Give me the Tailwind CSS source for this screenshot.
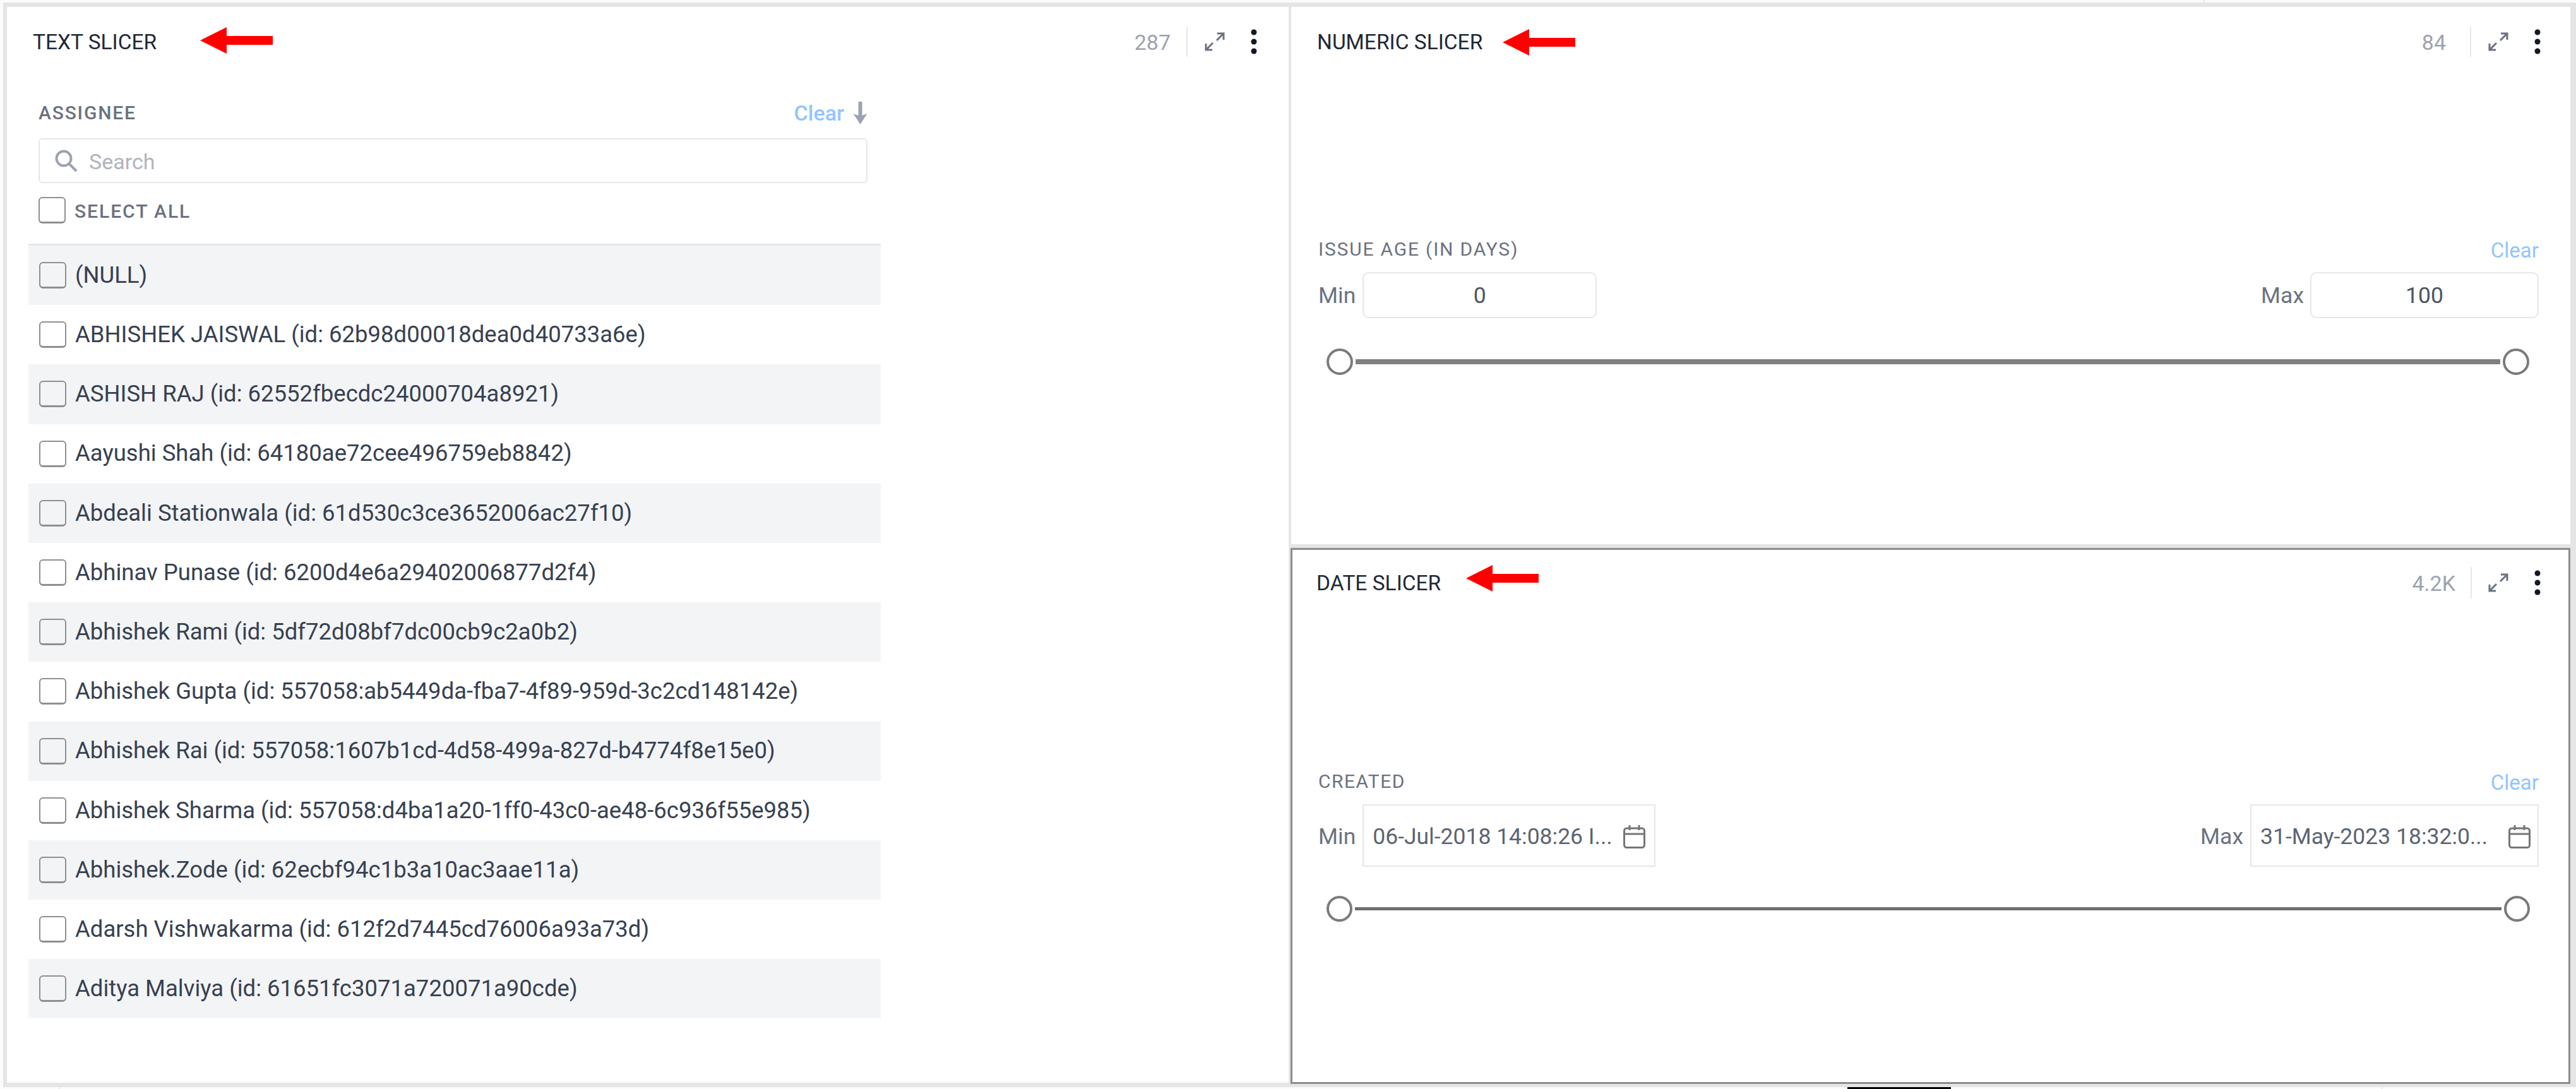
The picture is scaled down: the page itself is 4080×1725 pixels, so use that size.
<!DOCTYPE html>
<html lang="en">
<head>
    <meta charset="UTF-8">
    <title>Slicers</title>
    <script src="https://cdn.jsdelivr.net/npm/@tailwindcss/browser@4"></script>
</head>
<body class="m-0 bg-white">
<div class="relative w-[4080px] h-[1725px] overflow-hidden bg-[#fbfbfb] font-['Roboto',sans-serif]">

    <!-- top strip -->
    <div class="flex h-[4px]">
        <div class="w-[3490px]"></div>
        <div class="w-[2px] h-full bg-[#e5e5e5]"></div>
    </div>

    <div class="flex items-start gap-[3px] ml-[5px] h-[1718px] pl-[6px] pt-[7px] bg-[#e5e5e5]">

        <!-- Text slicer -->
        <section class="w-[2030px] h-[1704px] bg-white">
            <div class="flex items-center justify-between h-[110px] pl-[41px] pr-[50px]">
                <h2 class="pt-[2px] text-[33.500px] leading-none text-[#1f2937]">TEXT SLICER</h2>
                <div class="flex items-center">
                    <span class="pt-[2px] text-[34px] leading-none text-[#9ca3af]">287</span>
                    <div class="w-[2px] h-[47px] ml-[25px] mr-[27px] bg-[#e5e7eb]"></div>
                    <svg class="w-[32px] h-[30px]" viewBox="0 0 32 30" fill="none" stroke="#6b7280" stroke-width="3"><path d="M2 18v10h10M2 28l11-11M20 2h10v10M30 2L19 13"/></svg>
                    <svg class="w-[10px] h-[40px] ml-[41px]" viewBox="0 0 10 40" fill="#111827"><circle cx="5" cy="5" r="4.5"/><circle cx="5" cy="20" r="4.5"/><circle cx="5" cy="35" r="4.5"/></svg>
                </div>
            </div>

            <div class="w-[1313px] ml-[50px]">
                <div class="flex items-center justify-between h-[36px] mt-[40px]">
                    <span class="text-[30px] leading-none font-medium tracking-[0.06em] text-[#6b7280]">ASSIGNEE</span>
                    <div class="flex items-center gap-[14px]">
                        <span class="text-[34px] leading-none font-medium text-[#93c5fd]">Clear</span>
                        <svg class="w-[23px] h-[36px]" viewBox="0 0 23 36" fill="#9ca3af"><path d="M8.500 0h6v22l8-3-11 17L0.500 19l8 3z"/></svg>
                    </div>
                </div>
                <div class="flex items-center h-[71px] mt-[22px] pl-[24px] border-2 border-[#e5e7eb] rounded-[6px]">
                    <svg class="w-[36px] h-[36px]" viewBox="0 0 36 36" fill="none" stroke="#9ca3af" stroke-width="4"><circle cx="14" cy="14" r="11.500"/><path d="M22.500 22.500L34 34"/></svg>
                    <span class="ml-[18px] pt-[2px] text-[34px] leading-none text-[#b0b5bd]">Search</span>
                </div>
                <div class="flex items-center h-[42px] mt-[22px] mb-[32px]">
                    <div class="w-[43px] h-[42px] rounded-[6px] border-2 border-b-[3px] border-[#8f8f8f] bg-white"></div>
                    <span class="ml-[14px] pt-[3px] text-[30px] leading-none font-medium tracking-[0.065em] text-[#6b7280]">SELECT ALL</span>
                </div>
            </div>

            <div class="w-[1350px] ml-[34px] border-t-[3px] border-[#e5e7eb] text-[36.500px] leading-none text-[#374151]">
                <div class="flex items-center h-[94.200px] pl-[17px] bg-[#f3f4f6]"><div class="w-[43px] h-[42px] mr-[14px] rounded-[6px] border-2 border-b-[3px] border-[#8f8f8f]"></div>(NULL)</div>
                <div class="flex items-center h-[94.200px] pl-[17px]"><div class="w-[43px] h-[42px] mr-[14px] rounded-[6px] border-2 border-b-[3px] border-[#8f8f8f]"></div>ABHISHEK JAISWAL (id: 62b98d00018dea0d40733a6e)</div>
                <div class="flex items-center h-[94.200px] pl-[17px] bg-[#f3f4f6]"><div class="w-[43px] h-[42px] mr-[14px] rounded-[6px] border-2 border-b-[3px] border-[#8f8f8f]"></div>ASHISH RAJ (id: 62552fbecdc24000704a8921)</div>
                <div class="flex items-center h-[94.200px] pl-[17px]"><div class="w-[43px] h-[42px] mr-[14px] rounded-[6px] border-2 border-b-[3px] border-[#8f8f8f]"></div>Aayushi Shah (id: 64180ae72cee496759eb8842)</div>
                <div class="flex items-center h-[94.200px] pl-[17px] bg-[#f3f4f6]"><div class="w-[43px] h-[42px] mr-[14px] rounded-[6px] border-2 border-b-[3px] border-[#8f8f8f]"></div>Abdeali Stationwala (id: 61d530c3ce3652006ac27f10)</div>
                <div class="flex items-center h-[94.200px] pl-[17px]"><div class="w-[43px] h-[42px] mr-[14px] rounded-[6px] border-2 border-b-[3px] border-[#8f8f8f]"></div>Abhinav Punase (id: 6200d4e6a29402006877d2f4)</div>
                <div class="flex items-center h-[94.200px] pl-[17px] bg-[#f3f4f6]"><div class="w-[43px] h-[42px] mr-[14px] rounded-[6px] border-2 border-b-[3px] border-[#8f8f8f]"></div>Abhishek Rami (id: 5df72d08bf7dc00cb9c2a0b2)</div>
                <div class="flex items-center h-[94.200px] pl-[17px]"><div class="w-[43px] h-[42px] mr-[14px] rounded-[6px] border-2 border-b-[3px] border-[#8f8f8f]"></div>Abhishek Gupta (id: 557058:ab5449da-fba7-4f89-959d-3c2cd148142e)</div>
                <div class="flex items-center h-[94.200px] pl-[17px] bg-[#f3f4f6]"><div class="w-[43px] h-[42px] mr-[14px] rounded-[6px] border-2 border-b-[3px] border-[#8f8f8f]"></div>Abhishek Rai (id: 557058:1607b1cd-4d58-499a-827d-b4774f8e15e0)</div>
                <div class="flex items-center h-[94.200px] pl-[17px]"><div class="w-[43px] h-[42px] mr-[14px] rounded-[6px] border-2 border-b-[3px] border-[#8f8f8f]"></div>Abhishek Sharma (id: 557058:d4ba1a20-1ff0-43c0-ae48-6c936f55e985)</div>
                <div class="flex items-center h-[94.200px] pl-[17px] bg-[#f3f4f6]"><div class="w-[43px] h-[42px] mr-[14px] rounded-[6px] border-2 border-b-[3px] border-[#8f8f8f]"></div>Abhishek.Zode (id: 62ecbf94c1b3a10ac3aae11a)</div>
                <div class="flex items-center h-[94.200px] pl-[17px]"><div class="w-[43px] h-[42px] mr-[14px] rounded-[6px] border-2 border-b-[3px] border-[#8f8f8f]"></div>Adarsh Vishwakarma (id: 612f2d7445cd76006a93a73d)</div>
                <div class="flex items-center h-[94.200px] pl-[17px] bg-[#f3f4f6]"><div class="w-[43px] h-[42px] mr-[14px] rounded-[6px] border-2 border-b-[3px] border-[#8f8f8f]"></div>Aditya Malviya (id: 61651fc3071a720071a90cde)</div>
            </div>
        </section>

        <div class="flex flex-col gap-[6px] w-[2027px]">

            <!-- Numeric slicer -->
            <section class="ml-px h-[851px] bg-white">
                <div class="flex items-center justify-between h-[110px] pl-[41px] pr-[47px]">
                    <h2 class="pt-[2px] text-[33.500px] leading-none text-[#1f2937]">NUMERIC SLICER</h2>
                    <div class="flex items-center">
                        <span class="pt-[2px] text-[34px] leading-none text-[#9ca3af]">84</span>
                        <div class="w-[2px] h-[47px] ml-[38px] mr-[27px] bg-[#e5e7eb]"></div>
                        <svg class="w-[32px] h-[30px]" viewBox="0 0 32 30" fill="none" stroke="#6b7280" stroke-width="3"><path d="M2 18v10h10M2 28l11-11M20 2h10v10M30 2L19 13"/></svg>
                        <svg class="w-[10px] h-[40px] ml-[41px]" viewBox="0 0 10 40" fill="#111827"><circle cx="5" cy="5" r="4.500"/><circle cx="5" cy="20" r="4.500"/><circle cx="5" cy="35" r="4.500"/></svg>
                    </div>
                </div>
                <div class="pl-[43px] pr-[50px] pt-[252px]">
                    <div class="flex items-center justify-between h-[40px]">
                        <span class="pt-[3px] text-[30px] leading-none tracking-[0.06em] text-[#6b7280]">ISSUE AGE (IN DAYS)</span>
                        <span class="mt-[6px] text-[33px] leading-none text-[#93c5fd]">Clear</span>
                    </div>
                    <div class="flex items-center justify-between h-[73px] mt-[18px] text-[35.500px] leading-none text-[#6b7280]">
                        <div class="flex items-center h-full">
                            <span class="pt-[3px]">Min</span>
                            <div class="flex items-center justify-center w-[371px] h-full ml-[11px] pt-[3px] border-2 border-[#e5e7eb] rounded-[10px] text-[#4b5563]">0</div>
                        </div>
                        <div class="flex items-center h-full">
                            <span class="pt-[3px]">Max</span>
                            <div class="flex items-center justify-center w-[362px] h-full ml-[10px] pt-[3px] border-2 border-[#e5e7eb] rounded-[10px] text-[#4b5563]">100</div>
                        </div>
                    </div>
                    <div class="flex items-center gap-[4px] h-[43px] mt-[47px] pl-[13px] pr-[15px]">
                        <div class="w-[42px] h-[42px] rounded-full border-[4px] border-[#7b7b7b] bg-white"></div>
                        <div class="flex-1 h-[8px] bg-[#808080]"></div>
                        <div class="w-[42px] h-[42px] rounded-full border-[4px] border-[#7b7b7b] bg-white"></div>
                    </div>
                </div>
            </section>

            <!-- Date slicer -->
            <section class="h-[849px] border-[3px] border-[#8c8c8c] bg-white">
                <div class="flex items-center justify-between h-[104px] pl-[38px] pr-[44px]">
                    <h2 class="pt-[2px] text-[33.500px] leading-none text-[#1f2937]">DATE SLICER</h2>
                    <div class="flex items-center">
                        <span class="pt-[2px] text-[34px] leading-none text-[#9ca3af]">4.2K</span>
                        <div class="w-[2px] h-[50px] ml-[24px] mr-[26px] bg-[#e5e7eb]"></div>
                        <svg class="w-[32px] h-[30px]" viewBox="0 0 32 30" fill="none" stroke="#6b7280" stroke-width="3"><path d="M2 18v10h10M2 28l11-11M20 2h10v10M30 2L19 13"/></svg>
                        <svg class="w-[10px] h-[40px] ml-[41px]" viewBox="0 0 10 40" fill="#111827"><circle cx="5" cy="5" r="4.500"/><circle cx="5" cy="20" r="4.500"/><circle cx="5" cy="35" r="4.500"/></svg>
                    </div>
                </div>
                <div class="pl-[41px] pr-[47px] pt-[241px]">
                    <div class="flex items-center justify-between h-[40px]">
                        <span class="pt-[3px] text-[30px] leading-none tracking-[0.05em] text-[#6b7280]">CREATED</span>
                        <span class="mt-[6px] text-[33px] leading-none text-[#93c5fd]">Clear</span>
                    </div>
                    <div class="flex items-center justify-between h-[99px] mt-[18px] text-[35.500px] leading-none text-[#6b7280]">
                        <div class="flex items-center h-full">
                            <span class="pt-[5px]">Min</span>
                            <div class="flex items-center justify-between w-[464px] h-full ml-[11px] pl-[14px] pr-[14px] border-2 border-[#e5e7eb]">
                                <span class="pt-[5px] text-[#5b6472]">06-Jul-2018 14:08:26 I...</span>
                                <svg class="w-[35px] h-[37px] mt-[3px]" viewBox="0 0 35 37" fill="none" stroke="#757575" stroke-width="3"><rect x="1.500" y="5" width="32" height="30.500" rx="4"/><path d="M2 14h31M10 0v8M25 0v8"/></svg>
                            </div>
                        </div>
                        <div class="flex items-center h-full">
                            <span class="pt-[5px]">Max</span>
                            <div class="flex items-center justify-between w-[457px] h-full ml-[11px] pl-[14px] pr-[11px] border-2 border-[#e5e7eb]">
                                <span class="pt-[5px] text-[#5b6472]">31-May-2023 18:32:0...</span>
                                <svg class="w-[35px] h-[37px] mt-[3px]" viewBox="0 0 35 37" fill="none" stroke="#757575" stroke-width="3"><rect x="1.500" y="5" width="32" height="30.500" rx="4"/><path d="M2 14h31M10 0v8M25 0v8"/></svg>
                            </div>
                        </div>
                    </div>
                    <div class="flex items-center gap-[4px] h-[41px] mt-[46px] pl-[13px] pr-[14px]">
                        <div class="w-[41px] h-[41px] rounded-full border-[4px] border-[#7b7b7b] bg-white"></div>
                        <div class="flex-1 h-[5px] bg-[#6f6f6f]"></div>
                        <div class="w-[41px] h-[41px] rounded-full border-[4px] border-[#7b7b7b] bg-white"></div>
                    </div>
                </div>
            </section>
        </div>
    </div>

    <!-- bottom strip -->
    <div class="flex h-[3px]">
        <div class="w-[93px]"></div>
        <div class="w-[2px] bg-[#e5e5e5]"></div>
        <div class="w-[2831px]"></div>
        <div class="w-[164px] bg-black"></div>
        <div class="w-[682px]"></div>
        <div class="w-[2px] bg-[#e5e5e5]"></div>
    </div>

    <!-- red annotation arrows drawn over the screenshot -->
    <svg class="absolute left-[317px] top-[43px] w-[115px] h-[42px]" viewBox="0 0 115 42" fill="#ff0000"><path d="M0 21L42 0v14h73v14H42v14z"/></svg>
    <svg class="absolute left-[2380px] top-[46px] w-[115px] h-[42px]" viewBox="0 0 115 42" fill="#ff0000"><path d="M0 21L42 0v14h73v14H42v14z"/></svg>
    <svg class="absolute left-[2322px] top-[895px] w-[115px] h-[42px]" viewBox="0 0 115 42" fill="#ff0000"><path d="M0 21L42 0v14h73v14H42v14z"/></svg>
</div>
</body>
</html>
